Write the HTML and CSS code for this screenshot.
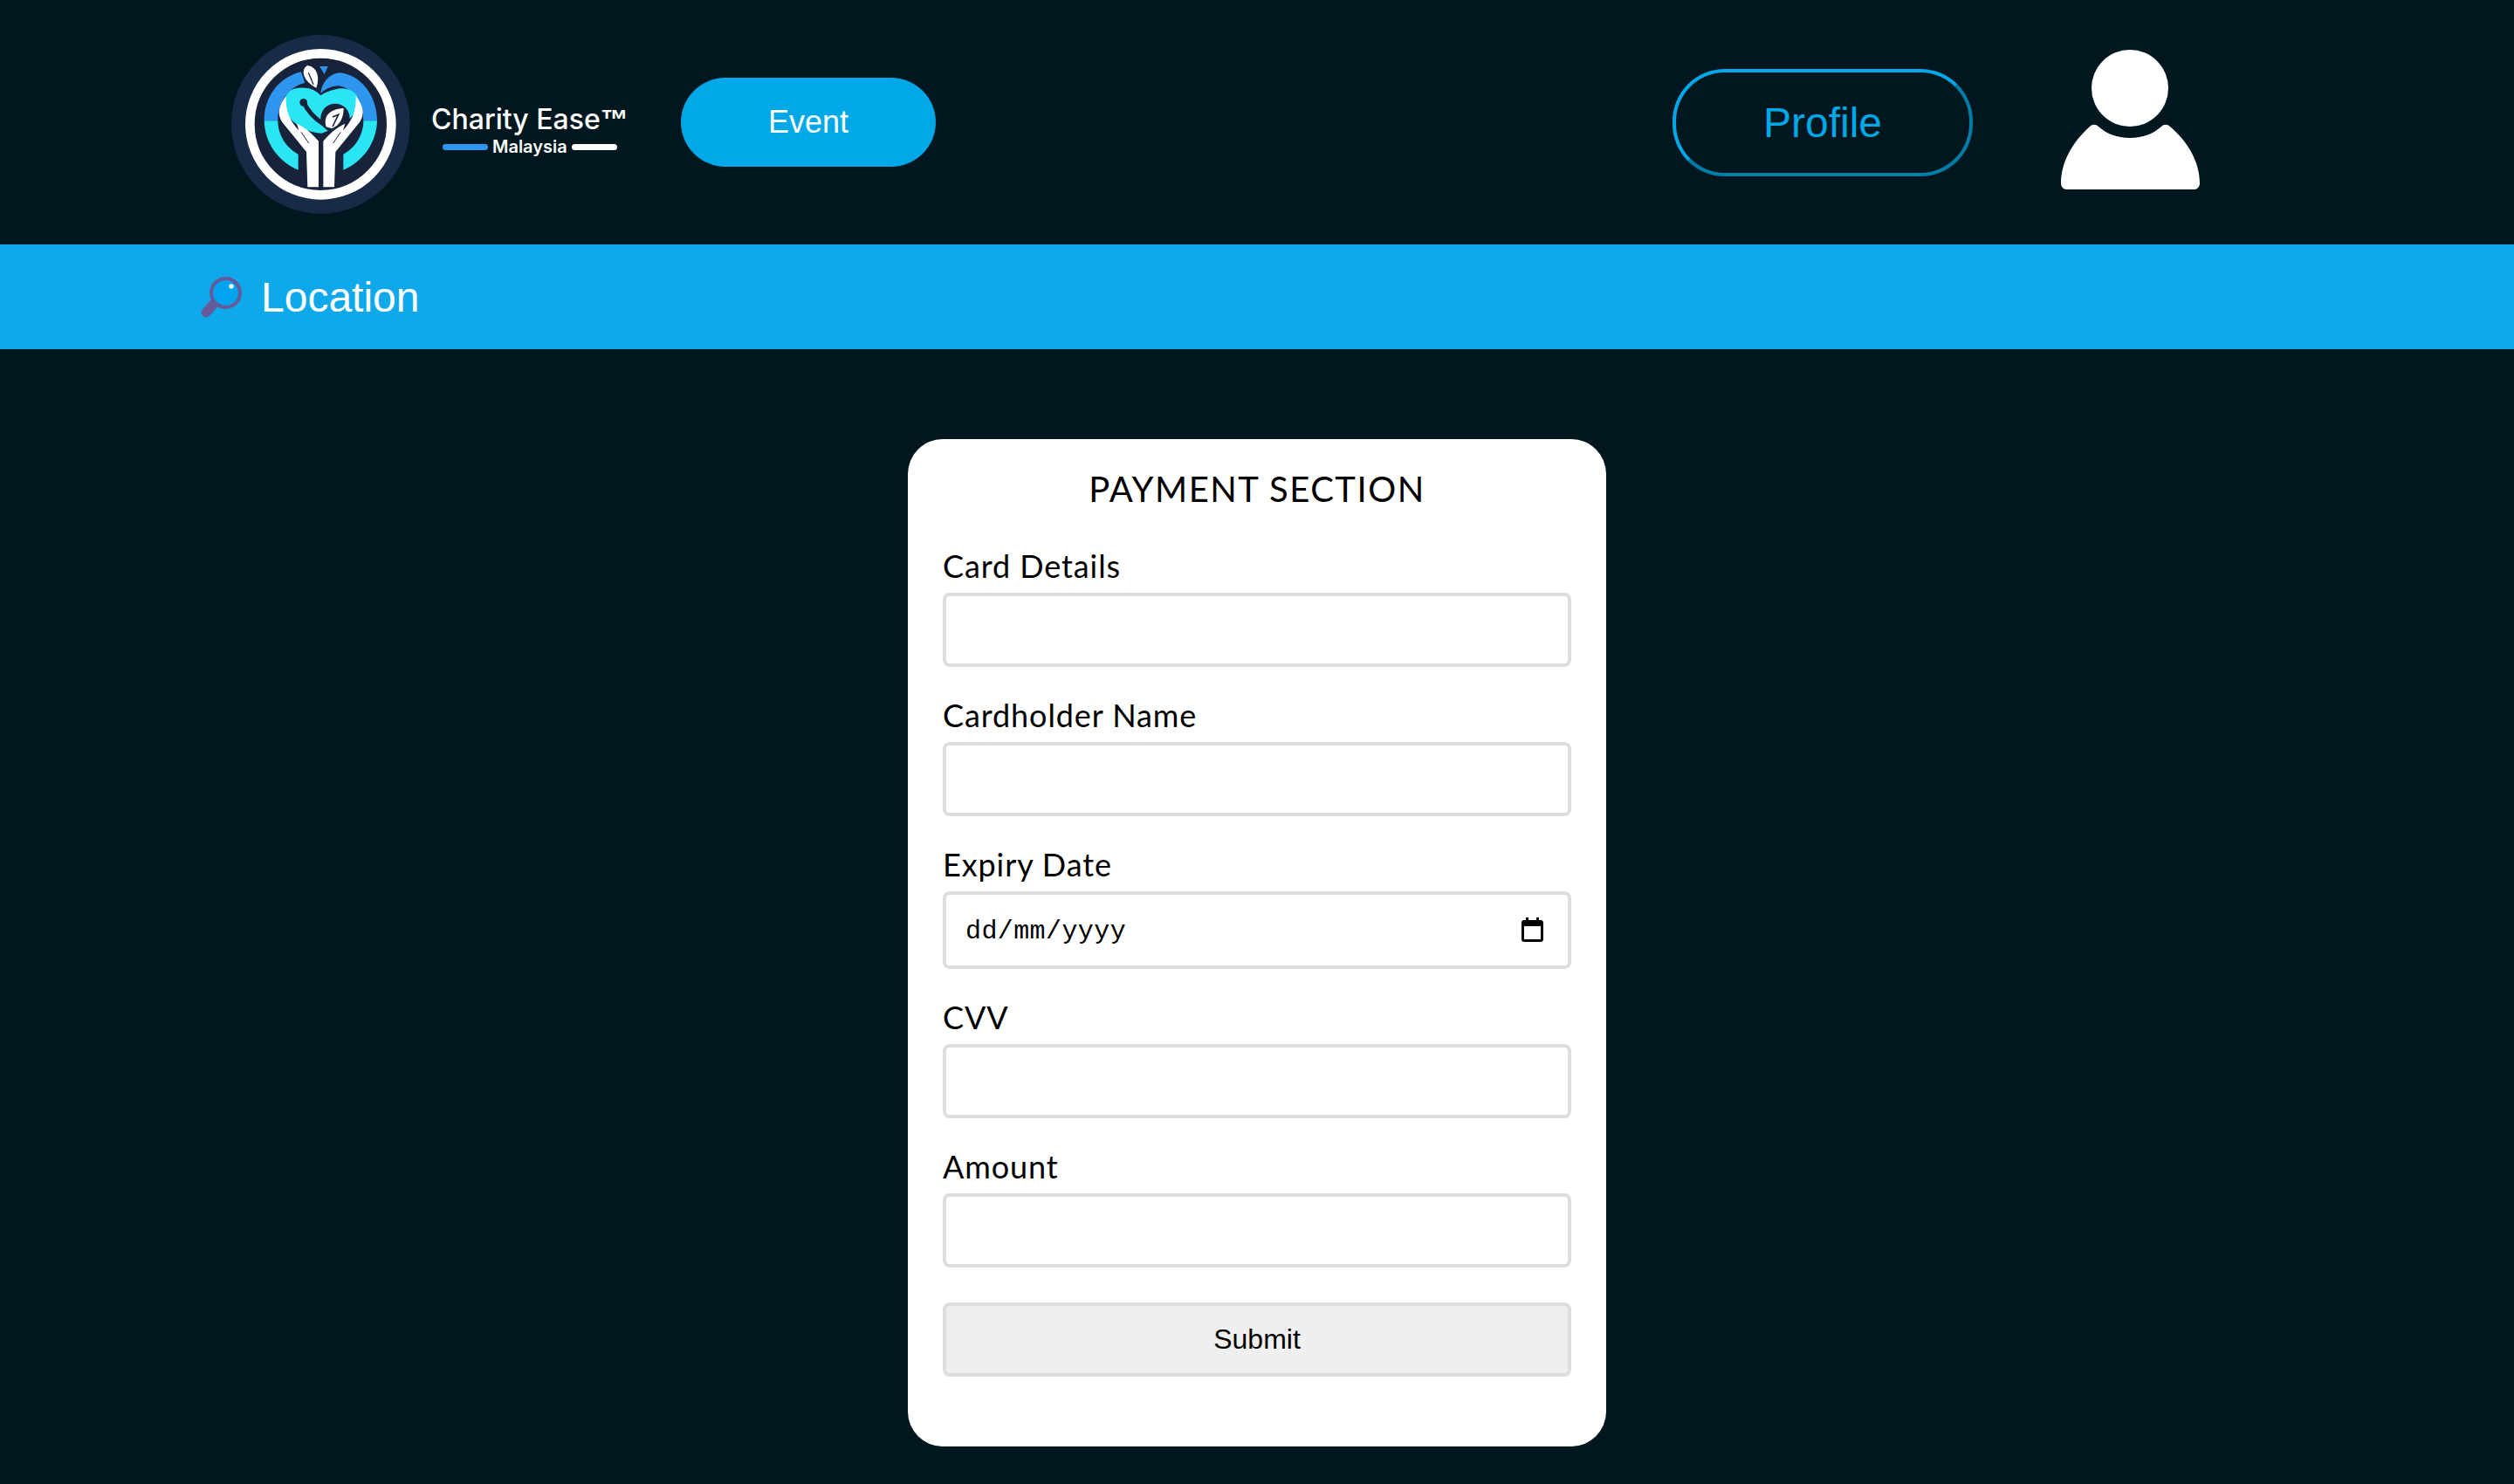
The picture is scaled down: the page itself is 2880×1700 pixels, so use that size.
FILE: index.html
```html
<!DOCTYPE html>
<html lang="en-GB">
<head>
    <meta charset="UTF-8">
    <meta name="viewport" content="width=device-width, initial-scale=1.0">
    <title>Payment</title>
    <link rel="stylesheet" href="styles.css">
</head>
<body>
    <header class="site-header">
        <div class="header-left">
            <a class="logo" href="#">
                <svg class="logo-mark" viewBox="0 0 660 660">
                    <circle cx="337" cy="337" r="307" fill="#182b46"/>
                    <circle cx="337" cy="337" r="243" fill="#17233a" stroke="#ffffff" stroke-width="32"/>
                    <path d="M143 325C143 240 195 175 270 157L283 195C230 205 190 260 190 325Z" fill="#2f96f0"/>
                    <path d="M337 232C340 195 365 165 400 160C475 165 531 240 531 325L484 325C484 265 440 205 395 205C370 207 350 218 337 232Z" fill="#2f96f0"/>
                    <path d="M333 138L362 138L350 165Z" fill="#2f96f0"/>
                    <path d="M143 325C145 400 190 465 260 494L260 440C220 420 190 375 190 325Z" fill="#2ae6f5"/>
                    <path d="M531 325C529 400 484 465 415 494L415 440C455 420 484 375 484 325Z" fill="#2ae6f5"/>
                    <path d="M337 238C320 215 280 205 245 215C215 225 205 260 215 290C235 335 290 365 340 368L400 345C440 320 470 290 468 260C465 225 430 210 395 215C370 220 350 228 337 238Z" fill="#2ae6f5"/>
                    <path d="M278 258C290 290 320 320 352 340" fill="none" stroke="#17233a" stroke-width="15" stroke-linecap="round"/>
                    <circle cx="278" cy="262" r="13" fill="#17233a"/>
                    <circle cx="387" cy="316" r="50" fill="#17233a"/>
                    <path d="M356 346C345 312 365 285 416 282C416 312 405 340 375 352Z" fill="#ffffff"/>
                    <path d="M378 312L398 304L378 345" fill="none" stroke="#17233a" stroke-width="5"/>
                    <path id="hand" d="M218 240C190 275 188 305 205 330L288 432L292 553L330 553L330 395C305 365 280 345 255 335L262 358C235 330 215 295 218 240Z" fill="#ffffff"/>
                    <use href="#hand" transform="matrix(-1 0 0 1 676 0)"/>
                    <path d="M270 364L296 402M406 364L380 402" fill="none" stroke="#17233a" stroke-width="3"/>
                    <path d="M292 135C270 145 270 185 322 212C335 175 325 140 292 135Z" fill="#ffffff"/>
                    <path d="M295 160L312 200" fill="none" stroke="#17233a" stroke-width="4"/>
                </svg>
                <div class="logo-text">
                    <div class="logo-name">Charity Ease<span class="logo-tm">™</span></div>
                    <div class="logo-sub">
                        <span class="logo-line logo-line-blue"></span>
                        <span>Malaysia</span>
                        <span class="logo-line logo-line-white"></span>
                    </div>
                </div>
            </a>
            <a class="event-btn" href="#">Event</a>
        </div>
        <div class="header-right">
            <a class="profile-btn" href="#">Profile</a>
            <svg class="user-icon" viewBox="0 0 160 160">
                <circle cx="79" cy="44" r="44" fill="#ffffff"/>
                <path d="M0 153C0 128 14 105 33 88C36 85 40 85 43 88C52 96 64 101 79 101C94 101 106 96 115 88C118 85 122 85 125 88C145 105 159 128 159 153C159 157 156 160 153 160L6 160C3 160 0 157 0 153Z" fill="#ffffff"/>
            </svg>
        </div>
    </header>

    <div class="location-bar">
        <svg class="search-icon" viewBox="0 0 47 47">
            <path d="M6 41L14 32" fill="none" stroke="#675a9b" stroke-width="11" stroke-linecap="round"/>
            <circle cx="28.5" cy="18.5" r="16.5" fill="#00a3ef" stroke="#675a9b" stroke-width="4"/>
            <circle cx="35" cy="11" r="2.8" fill="#e8f8ff"/>
        </svg>
        <span>Location</span>
    </div>

    <main class="content">
        <form class="payment-card">
            <h2>PAYMENT SECTION</h2>
            <div class="field">
                <label for="card">Card Details</label>
                <input type="text" id="card">
            </div>
            <div class="field">
                <label for="holder">Cardholder Name</label>
                <input type="text" id="holder">
            </div>
            <div class="field">
                <label for="expiry">Expiry Date</label>
                <div class="date-field">
                    <input type="text" id="expiry" placeholder="dd/mm/yyyy">
                    <svg class="calendar-icon" viewBox="0 0 25 28">
                        <path d="M5 0H8V3H17V0H20V3H22C23.7 3 25 4.3 25 6V25C25 26.7 23.7 28 22 28H3C1.3 28 0 26.7 0 25V6C0 4.3 1.3 3 3 3H5ZM3 10V25H22V10Z" fill="#000000"/>
                    </svg>
                </div>
            </div>
            <div class="field">
                <label for="cvv">CVV</label>
                <input type="text" id="cvv">
            </div>
            <div class="field">
                <label for="amount">Amount</label>
                <input type="text" id="amount">
            </div>
            <button type="submit" class="submit-btn">Submit</button>
        </form>
    </main>
</body>
</html>
```

FILE: styles.css
```css
body {
    margin: 0;
    padding: 0;
    background-color: #00171f;
    font-family: "Liberation Sans", Arial, sans-serif;
    color: #000000;
}

a {
    text-decoration: none;
}

.site-header {
    height: 280px;
    display: flex;
    justify-content: space-between;
    align-items: center;
    padding: 0 359px 0 255px;
}

.header-left,
.header-right {
    display: flex;
    align-items: center;
}

.logo {
    display: flex;
    align-items: center;
    gap: 19px;
    width: 485px;
    color: #ffffff;
}

.logo-mark {
    flex: none;
    width: 220px;
    height: 220px;
}

.logo-text {
    padding-top: 18px;
}

.logo-name {
    font-family: "Inter", sans-serif;
    font-size: 32px;
    font-weight: 500;
    line-height: 38px;
    white-space: nowrap;
}

.logo-tm {
    font-family: "Liberation Sans", sans-serif;
    font-weight: 700;
}

.logo-sub {
    display: flex;
    align-items: center;
    justify-content: center;
    gap: 5px;
    font-family: "Inter", sans-serif;
    font-size: 20px;
    font-weight: 600;
    line-height: 24px;
}

.logo-line {
    width: 52px;
    height: 7px;
    border-radius: 4px;
}

.logo-line-blue {
    background-color: #2f96f0;
}

.logo-line-white {
    background-color: #ffffff;
}

.event-btn {
    width: 292px;
    height: 102px;
    margin-left: 40px;
    display: flex;
    justify-content: center;
    align-items: center;
    border-radius: 51px;
    background-color: #00a8e8;
    color: #ffffff;
    font-size: 36px;
}

.header-right {
    gap: 101px;
}

.profile-btn {
    width: 344px;
    height: 123px;
    box-sizing: border-box;
    display: flex;
    justify-content: center;
    align-items: center;
    border: 4px solid;
    border-color: #00a8e8 #007ea7 #007ea7 #00a8e8;
    border-radius: 60px;
    color: #00a8e8;
    font-size: 48px;
}

.user-icon {
    width: 160px;
    height: 160px;
    margin-bottom: 6px;
}

.location-bar {
    height: 120px;
    display: flex;
    align-items: center;
    gap: 22px;
    padding-left: 230px;
    background-color: #0fa8ea;
    color: #ffffff;
    font-size: 48px;
}

.search-icon {
    width: 47px;
    height: 47px;
}

.content {
    display: flex;
    justify-content: center;
    padding-top: 103px;
    padding-bottom: 43px;
}

.payment-card {
    width: 800px;
    box-sizing: border-box;
    padding: 32px 40px 80px;
    border-radius: 40px;
    background-color: #ffffff;
}

.payment-card h2 {
    margin: 0 0 48px;
    font-family: "Lato", sans-serif;
    font-size: 40px;
    font-weight: 400;
    line-height: 50px;
    letter-spacing: 1.5px;
    text-align: center;
}

.field {
    margin-bottom: 40px;
}

.field label {
    display: block;
    margin-bottom: 16px;
    font-family: "Lato", sans-serif;
    font-size: 36px;
    line-height: 30px;
    letter-spacing: 0.9px;
}

.field input {
    display: block;
    width: 100%;
    height: 85px;
    box-sizing: border-box;
    padding: 0 20px;
    border: 4px solid #dddddd;
    border-radius: 8px;
    background-color: #ffffff;
    font-family: "Liberation Mono", monospace;
    font-size: 30px;
}

.field input::placeholder {
    color: #000000;
    opacity: 1;
}

.date-field {
    position: relative;
}

.date-field input {
    height: 89px;
    padding-top: 2px;
    padding-left: 22px;
    letter-spacing: 0.4px;
}

.calendar-icon {
    position: absolute;
    top: 30px;
    right: 32px;
    width: 25px;
    height: 28px;
}

.submit-btn {
    display: block;
    width: 100%;
    height: 85px;
    box-sizing: border-box;
    border: 4px solid #dddddd;
    border-radius: 8px;
    background-color: #efefef;
    font-family: "Liberation Sans", Arial, sans-serif;
    font-size: 32px;
    color: #000000;
}
```
